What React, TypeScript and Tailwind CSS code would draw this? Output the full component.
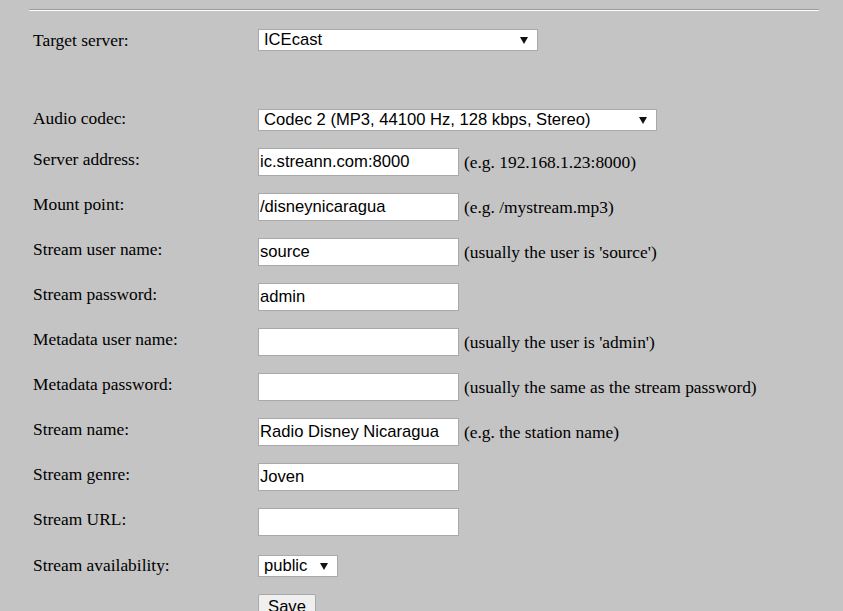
const fields = [
  { label: "Server address:", value: "ic.streann.com:8000", hint: "(e.g. 192.168.1.23:8000)" },
  { label: "Mount point:", value: "/disneynicaragua", hint: "(e.g. /mystream.mp3)" },
  { label: "Stream user name:", value: "source", hint: "(usually the user is 'source')" },
  { label: "Stream password:", value: "admin", hint: "" },
  { label: "Metadata user name:", value: "", hint: "(usually the user is 'admin')" },
  { label: "Metadata password:", value: "", hint: "(usually the same as the stream password)" },
  { label: "Stream name:", value: "Radio Disney Nicaragua", hint: "(e.g. the station name)" },
  { label: "Stream genre:", value: "Joven", hint: "" },
  { label: "Stream URL:", value: "", hint: "" },
];

const Arrow = () => (
  <svg width="8" height="8" viewBox="0 0 8 8" className="shrink-0">
    <path d="M0 1 H8 L4 8 Z" fill="#111" />
  </svg>
);

const FakeSelect = ({ value, width }: { value: string; width: string }) => (
  <div
    className={`${width} h-[22px] bg-white border border-[#a9a9a9] flex items-center justify-between pl-[5px] pr-[9px] text-[16.6px] text-black font-['Liberation_Sans',Arial,sans-serif]`}
  >
    <span>{value}</span>
    <Arrow />
  </div>
);

const App = () => {
  return (
    <div className="min-h-[611px] bg-[#c4c4c4] font-['Liberation_Serif','Times_New_Roman',serif] text-[17.4px] text-black overflow-hidden">
      <div className="pt-[9px] ml-[29px] mr-[24px]">
        <div className="border-t border-t-[#9a9a9a] border-b border-b-white" />
      </div>

      <div className="pl-[33px]">
        {/* Target server */}
        <div className="flex items-start mt-[18px]">
          <div className="w-[225px] mt-[1px] leading-[20px]">Target server:</div>
          <FakeSelect value="ICEcast" width="w-[280px]" />
        </div>

        {/* Audio codec */}
        <div className="flex items-start mt-[58px]">
          <div className="w-[225px] leading-[18px]">Audio codec:</div>
          <FakeSelect value="Codec 2 (MP3, 44100 Hz, 128 kbps, Stereo)" width="w-[399px]" />
        </div>

        <div className="mt-[17px]">
          {fields.map((f) => (
            <div key={f.label} className="flex items-start h-[45px]">
              <div className="w-[225px] mt-[1px] leading-[20px]">{f.label}</div>
              <div className="flex items-center gap-[5px]">
                <input
                  readOnly
                  value={f.value}
                  className="w-[201px] h-[28px] bg-white border border-[#a9a9a9] px-[1px] text-[16.6px] text-black font-['Liberation_Sans',Arial,sans-serif] outline-none"
                />
                {f.hint && <span className="leading-[20px]">{f.hint}</span>}
              </div>
            </div>
          ))}

          {/* Availability */}
          <div className="flex items-start h-[40px] pt-[2px]">
            <div className="w-[225px] leading-[20px]">Stream availability:</div>
            <FakeSelect value="public" width="w-[80px]" />
          </div>

          <div className="pl-[225px]">
            <button className="w-[58px] h-[26px] bg-[#efefef] border border-[#a9a9a9] rounded-[2px] text-[16.6px] font-['Liberation_Sans',Arial,sans-serif] text-black">
              Save
            </button>
          </div>
        </div>
      </div>
    </div>
  );
};

export default App;
